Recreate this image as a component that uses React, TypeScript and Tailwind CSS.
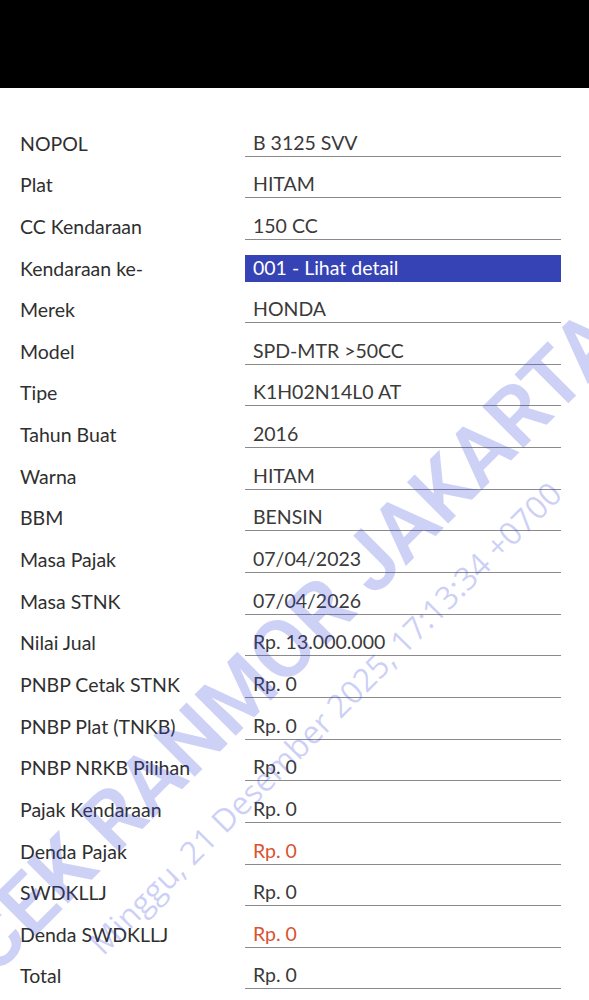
import React from "react";

type Row = { label: string; value: string; tone?: "link" | "red" };

const rows: Row[] = [
  { label: "NOPOL", value: "B 3125 SVV" },
  { label: "Plat", value: "HITAM" },
  { label: "CC Kendaraan", value: "150 CC" },
  { label: "Kendaraan ke-", value: "001 - Lihat detail", tone: "link" },
  { label: "Merek", value: "HONDA" },
  { label: "Model", value: "SPD-MTR >50CC" },
  { label: "Tipe", value: "K1H02N14L0 AT" },
  { label: "Tahun Buat", value: "2016" },
  { label: "Warna", value: "HITAM" },
  { label: "BBM", value: "BENSIN" },
  { label: "Masa Pajak", value: "07/04/2023" },
  { label: "Masa STNK", value: "07/04/2026" },
  { label: "Nilai Jual", value: "Rp. 13.000.000" },
  { label: "PNBP Cetak STNK", value: "Rp. 0" },
  { label: "PNBP Plat (TNKB)", value: "Rp. 0" },
  { label: "PNBP NRKB Pilihan", value: "Rp. 0" },
  { label: "Pajak Kendaraan", value: "Rp. 0" },
  { label: "Denda Pajak", value: "Rp. 0", tone: "red" },
  { label: "SWDKLLJ", value: "Rp. 0" },
  { label: "Denda SWDKLLJ", value: "Rp. 0", tone: "red" },
  { label: "Total", value: "Rp. 0" },
];

export default function App() {
  return (
    <div className="relative h-[1000px] w-[589px] overflow-hidden bg-white font-['Lato',sans-serif]">
      <div className="h-[88px] bg-black" />

      {/* Detail rows */}
      <div className="pt-[27px]">
        {rows.map((r) => (
          <div key={r.label} className="flex h-[41.65px] items-end">
            <div className="w-[245px] pl-5 text-[19.5px] leading-[26px] text-[#2f2f2f]">
              {r.label}
            </div>
            <div
              className={
                r.tone === "link"
                  ? "w-[316px] border-b-[1.5px] border-[#3643b5] bg-[#3643b5] px-2 text-[19.5px] leading-[26px] text-white"
                  : r.tone === "red"
                  ? "w-[316px] border-b-[1.5px] border-[#8a8a8a] px-2 text-[19.5px] leading-[26px] text-[#d9532f]"
                  : "w-[316px] border-b-[1.5px] border-[#8a8a8a] px-2 text-[19.5px] leading-[26px] text-[#3a3a3a]"
              }
            >
              {r.value}
            </div>
          </div>
        ))}
      </div>

      {/* Watermark */}
      <div className="pointer-events-none absolute left-[290px] top-[642px] -translate-x-1/2 -translate-y-1/2 -rotate-45 whitespace-nowrap font-['Roboto',sans-serif] text-[82px] font-semibold leading-none text-[#3a46dc]/25">
        CEK RANMOR JAKARTA
      </div>
      <div className="pointer-events-none absolute left-[325px] top-[718px] -translate-x-1/2 -translate-y-1/2 -rotate-45 whitespace-nowrap font-['Open_Sans',sans-serif] text-[32px] leading-none text-[#3a46dc]/25">
        Minggu, 21 Desember 2025, 17:13:34 +0700
      </div>
    </div>
  );
}
